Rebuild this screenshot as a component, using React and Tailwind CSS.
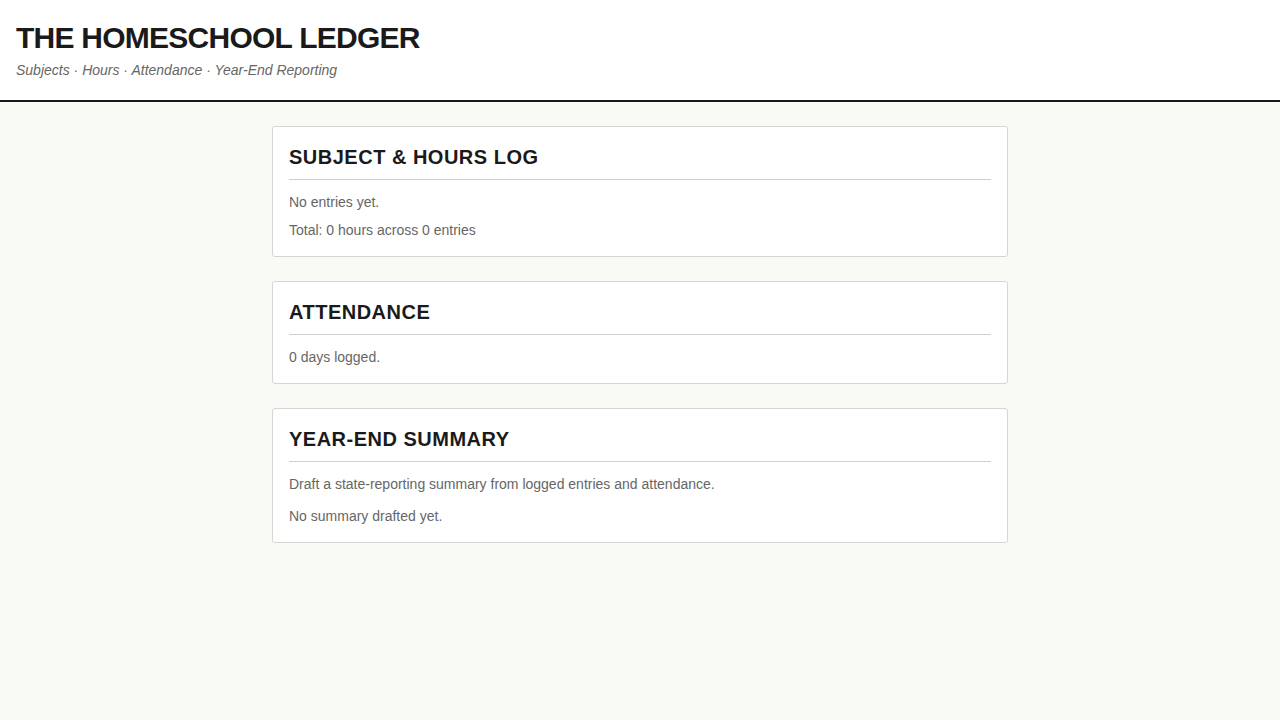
function Card({ title, children }) {
  return (
    <section className="rounded-[3px] border border-[#d6d6d0] bg-white p-4">
      <h2 className="border-b border-[#cfcfcb] pb-2 text-[20px] font-bold leading-[28px] tracking-[0.025em] text-[#1a1a1a]">
        {title}
      </h2>
      <div className="mt-3 text-[14px] leading-5 text-[#666]">{children}</div>
    </section>
  )
}

export default function App() {
  return (
    <div className="min-h-screen bg-[#f9f9f6] font-['Liberation_Sans',Arial,sans-serif]">
      <header className="border-b-2 border-[#1a1a1a] bg-white px-4 pb-5 pt-5">
        <h1 className="text-[30px] font-bold leading-9 tracking-[-0.025em] text-[#1a1a1a]">THE HOMESCHOOL LEDGER</h1>
        <p className="mt-1 text-[14px] italic leading-5 text-[#666]">
          Subjects · Hours · Attendance · Year-End Reporting
        </p>
      </header>

      <main className="mx-auto flex w-[736px] flex-col gap-6 pb-10 pt-6">
        <Card title="SUBJECT & HOURS LOG">
          <p>No entries yet.</p>
          <p className="mt-2">Total: 0 hours across 0 entries</p>
        </Card>

        <Card title="ATTENDANCE">
          <p>0 days logged.</p>
        </Card>

        <Card title="YEAR-END SUMMARY">
          <p>Draft a state-reporting summary from logged entries and attendance.</p>
          <p className="mt-3">No summary drafted yet.</p>
        </Card>
      </main>
    </div>
  )
}
